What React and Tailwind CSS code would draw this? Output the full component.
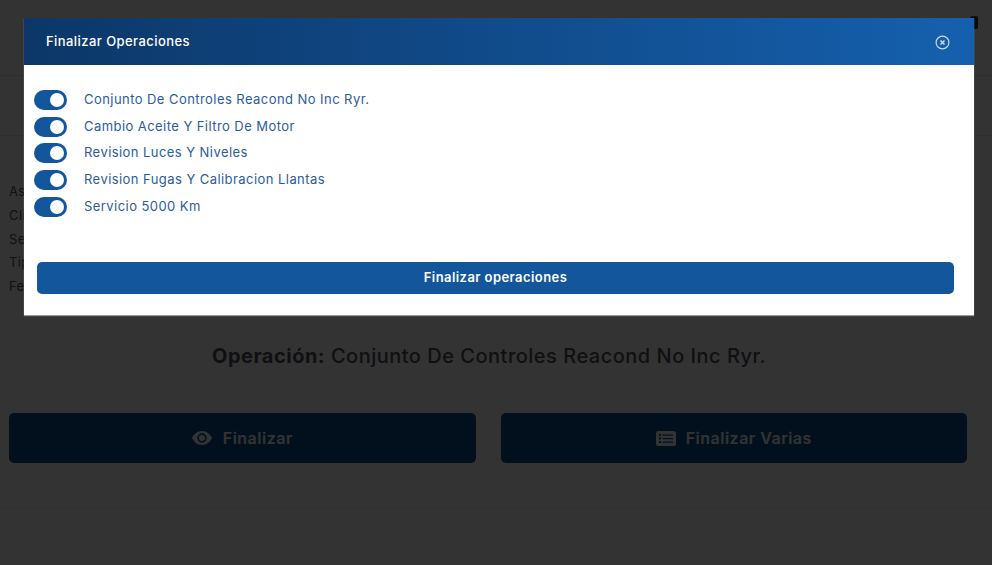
const ops = [
  "Conjunto De Controles Reacond No Inc Ryr.",
  "Cambio Aceite Y Filtro De Motor",
  "Revision Luces Y Niveles",
  "Revision Fugas Y Calibracion Llantas",
  "Servicio 5000 Km",
];

function Toggle() {
  return (
    <span className="flex h-5 w-[33px] shrink-0 items-center justify-end rounded-full bg-[#13569b] pr-[3px]">
      <span className="h-[14px] w-[14px] rounded-full bg-white" />
    </span>
  );
}

function CloseIcon() {
  return (
    <svg width="15" height="15" viewBox="0 0 15 15" fill="none" stroke="#c9d8ea">
      <circle cx="7.500" cy="7.500" r="6.400" strokeWidth="1.200" />
      <path d="M5.500 5.500l4 4M9.500 5.500l-4 4" strokeWidth="1.600" />
    </svg>
  );
}

function EyeIcon() {
  return (
    <svg width="20" height="14" viewBox="0 0 20 14" fill="#ffffff">
      <path fillRule="evenodd" d="M10 0C5.500 0 2 2.800 0 7c2 4.200 5.500 7 10 7s8-2.800 10-7c-2-4.200-5.500-7-10-7Zm0 2.300a4.700 4.700 0 1 1 0 9.400 4.700 4.700 0 0 1 0-9.400Zm0 1.700a3 3 0 1 0 0 6 3 3 0 0 0 0-6Z" />
    </svg>
  );
}

function ListIcon() {
  return (
    <svg width="20" height="15" viewBox="0 0 20 15">
      <rect width="20" height="15" rx="2" fill="#ffffff" />
      <g fill="#0a5098">
        <rect x="3" y="3" width="2" height="2" />
        <rect x="3" y="6.500" width="2" height="2" />
        <rect x="3" y="10" width="2" height="2" />
        <rect x="6.500" y="3.500" width="10.500" height="1.200" />
        <rect x="6.500" y="7" width="10.500" height="1.200" />
        <rect x="6.500" y="10.500" width="10.500" height="1.200" />
      </g>
    </svg>
  );
}

export default function App() {
  return (
    <div className="relative h-[565px] w-[992px] overflow-hidden bg-white font-['Inter','Liberation_Sans',sans-serif]">
      {/* pagina de fondo */}
      <div className="h-[76px] border-b border-[#e8e8e8]" />
      <div className="h-[60px] border-b border-[#e8e8e8]" />
      <div className="flex flex-col gap-[4.750px] pl-[9px] pt-[46px] text-[13px] leading-[19px] tracking-[0.4px] text-[#555]">
        <p>Asesor</p>
        <p>Cliente</p>
        <p>Serie</p>
        <p>Tipo</p>
        <p>Fecha</p>
      </div>
      <h2 className="mt-[46px] pr-[14px] text-center text-[20px] font-medium leading-[28px] tracking-[0.5px] text-[#50505a]">
        <b className="font-bold">Operación:</b> Conjunto De Controles Reacond No Inc Ryr.
      </h2>
      <div className="mt-[43px] grid grid-cols-2 gap-[25px] pl-[9px] pr-[25px]">
        <div className="flex h-[50px] items-center justify-center gap-[11px] rounded-[5px] bg-[#0a5098] text-[16px] font-semibold tracking-[0.5px] text-white">
          <EyeIcon />
          Finalizar
        </div>
        <div className="flex h-[50px] items-center justify-center gap-[10px] rounded-[5px] bg-[#0a5098] text-[16px] font-semibold tracking-[0.5px] text-white">
          <ListIcon />
          Finalizar Varias
        </div>
      </div>
      <div className="mt-[44px] border-t border-[#f0f0f0]" />

      {/* icono del encabezado que asoma detras del modal */}
      <div className="absolute left-[970px] top-[16px] h-[13px] w-[8px] rounded-[2px] bg-[#333]" />

      {/* overlay */}
      <div className="absolute inset-0 bg-black/80" />

      {/* modal */}
      <div className="absolute left-[24px] top-[18px] w-[950px] bg-white shadow-[0_1px_1px_rgba(255,255,255,0.5)]">
        <div className="flex h-[47px] items-center justify-between bg-gradient-to-r from-[#0c3768] to-[#1560ae] pl-[22px] pr-[24px]">
          <span className="text-[13px] font-medium tracking-[0.43px] text-white">Finalizar Operaciones</span>
          <span className="pt-[1px]">
            <CloseIcon />
          </span>
        </div>
        <div className="px-[10px] pt-[25px]">
          <ul className="flex flex-col gap-[6.700px]">
            {ops.map((op) => (
              <li key={op} className="flex h-5 items-center gap-[17px] text-[13px] tracking-[0.44px] text-[#2b5c9e]">
                <Toggle />
                <span className="mb-[0.8px]">{op}</span>
              </li>
            ))}
          </ul>
        </div>
        <div className="pb-[21px] pl-[13px] pr-[20px] pt-[45.200px]">
          <div className="flex h-[32px] items-center justify-center rounded-[5px] bg-[#13569b] text-[13px] font-semibold tracking-[0.43px] text-white">
            Finalizar operaciones
          </div>
        </div>
      </div>
    </div>
  );
}
